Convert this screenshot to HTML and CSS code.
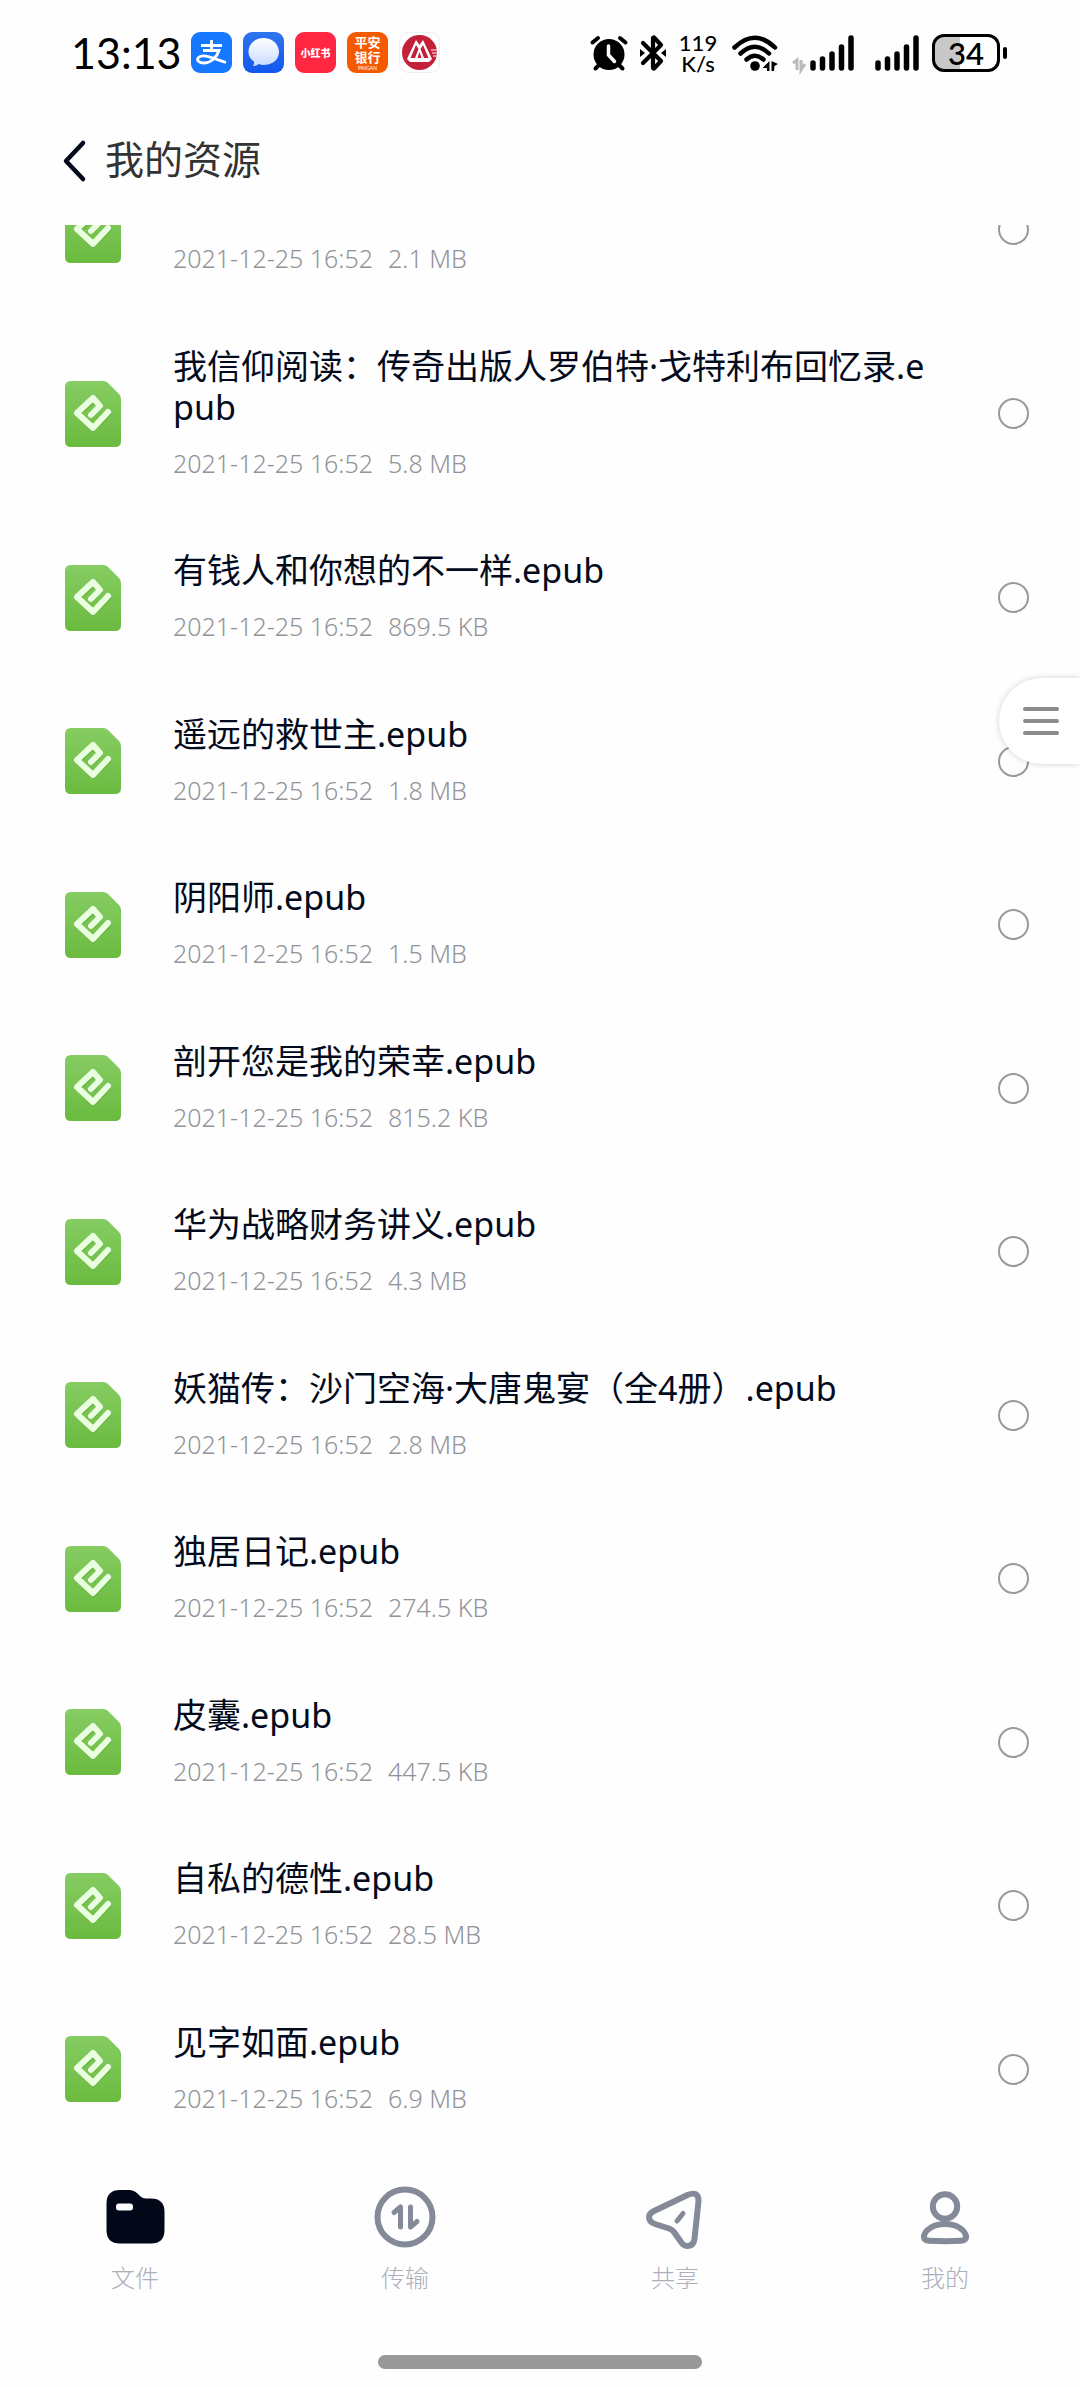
FILE: index.html
```html
<!DOCTYPE html>
<html lang="zh-CN">
<head>
    <meta charset="UTF-8">
    <meta name="viewport" content="width=device-width, initial-scale=1.0">
    <title>我的资源</title>
    <link rel="stylesheet" href="styles.css">
</head>
<body>
    <!-- Shared shapes -->
    <svg class="defs" width="0" height="0" aria-hidden="true">
        <defs>
            <linearGradient id="green" x1="0" y1="0" x2="0" y2="1">
                <stop offset="0" stop-color="#86cc62"/>
                <stop offset="1" stop-color="#6abb40"/>
            </linearGradient>
            <linearGradient id="blue" x1="0" y1="0" x2="0" y2="1">
                <stop offset="0" stop-color="#2f74ee"/>
                <stop offset="1" stop-color="#1257ec"/>
            </linearGradient>
            <linearGradient id="bubble" x1="0" y1="0" x2="0" y2="1">
                <stop offset="0" stop-color="#ffffff"/>
                <stop offset="1" stop-color="#c9daff"/>
            </linearGradient>
            <symbol id="epub" viewBox="0 0 56 66">
                <path d="M6 0H38Q41 0 43 2L54 13Q56 15 56 18V60Q56 66 50 66H6Q0 66 0 60V6Q0 0 6 0Z" fill="url(#green)"/>
                <path d="M43 33L28 48L13 33L28 19L35 26L27 34" fill="none" stroke="#4f9d2b" stroke-opacity=".45" stroke-width="6" stroke-linecap="round" stroke-linejoin="round"/>
                <path d="M43 31L28 47L12 32L28 17L35 25L26 34" fill="none" stroke="#eaffe0" stroke-width="6" stroke-linecap="round" stroke-linejoin="round"/>
            </symbol>
            <symbol id="signal" viewBox="0 0 44 36">
                <path d="M3 28V33M12.500 24V33M22 19V33M31.500 12V33M41 3V33" stroke="#000" stroke-width="5.500" stroke-linecap="round"/>
            </symbol>
        </defs>
    </svg>

    <div class="status-bar">
        <span class="time">13:13</span>
        <div class="apps">
            <svg width="41" height="41" viewBox="0 0 41 41">
                <rect width="41" height="41" rx="9" fill="#1677ff"/>
                <path d="M10 13.500H31M20.500 8V18M12 18.500H28C26 25 20 31 13 31C8 31 5 28 7.500 25.500C12 21.500 21 26 35 30.500" fill="none" stroke="#fff" stroke-width="2.800"/>
            </svg>
            <svg width="41" height="41" viewBox="0 0 41 41">
                <rect width="41" height="41" rx="9" fill="url(#blue)"/>
                <path d="M20.500 6C29 6 36 12 36 20S29 33 20.500 33Q18 33 16 32Q14 34 10 34Q11.500 32 11 29.500C8 27.500 5.500 24 5.500 20C5.500 12 12 6 20.500 6Z" fill="url(#bubble)"/>
            </svg>
            <span class="app app-red">小红书</span>
            <span class="app app-orange"><b>平安</b><b>银行</b><i>PINGAN</i></span>
            <svg width="41" height="41" viewBox="0 0 41 41">
                <rect x=".5" y=".5" width="40" height="40" rx="9" fill="#fff" stroke="#eee"/>
                <circle cx="20.500" cy="20.500" r="17.500" fill="#c4203a"/>
                <path d="M8 27L17 8L20.500 13L24 8L33 27L30 30H11Z" fill="#fff"/>
                <path d="M17 13L19.500 17L16 26H11.500ZM24 13L29.500 26H25L21.500 17ZM20.500 20L22.500 26H18.500Z" fill="#c4203a"/>
                <path d="M32 18H39M33 21H39M34 24H38" stroke="#fff" stroke-width="1"/>
            </svg>
        </div>

        <div class="indicators">
            <svg width="38" height="36" viewBox="0 0 38 36">
                <circle cx="19" cy="19.500" r="15.500"/>
                <path d="M2.500 7.500L8 3M35.500 7.500L30 3M9 30L5.500 33.500M29 30L32.500 33.500" stroke="#000" stroke-width="4" stroke-linecap="round"/>
                <path d="M18.500 11V20L24.500 26.500" fill="none" stroke="#fff" stroke-width="3.500" stroke-linecap="round" stroke-linejoin="round"/>
            </svg>
            <svg class="bluetooth" width="26" height="36" viewBox="0 0 26 36">
                <path d="M3 8L21 26L14 33.500L13 33V3L14 2.500L21 10L3 28" fill="none" stroke="#000" stroke-width="4.200" stroke-linecap="round" stroke-linejoin="round"/>
                <path d="M0 14L5 18L0 22ZM26 14L21 18L26 22Z"/>
            </svg>
            <span class="speed"><span>119</span><span>K/s</span></span>
            <svg class="wifi" width="46" height="36" viewBox="0 0 46 36">
                <path d="M2.500 12.500Q23 -7 43 12.500M8.500 18.500Q23 5 37 18.500M14.500 24.500Q23 17 31.500 24.500" fill="none" stroke="#000" stroke-width="4.500" stroke-linecap="round"/>
                <circle cx="23" cy="31" r="4.800"/>
                <path d="M37.500 26V36H35V33H30.500ZM39.500 36V26L46 29L42.500 31L42 36Z"/>
            </svg>
            <svg class="data" width="14" height="36" viewBox="0 0 14 36">
                <path d="M1 28L5 25V35M9 25V35L13 29" fill="none" stroke="#bbb" stroke-width="3"/>
            </svg>
            <svg class="bars" width="44" height="36"><use href="#signal"/></svg>
            <svg class="bars-second" width="44" height="36"><use href="#signal"/></svg>
            <span class="battery">34</span>
            <span class="battery-tip"></span>
        </div>
    </div>

    <header class="header">
        <button type="button" class="back" aria-label="返回">
            <svg width="24" height="42" viewBox="0 0 24 42">
                <path d="M21 3L4 21L21 39" fill="none" stroke="#03081a" stroke-width="4.500" stroke-linecap="round" stroke-linejoin="round"/>
            </svg>
        </button>
        <h1>我的资源</h1>
    </header>

    <main class="files">
        <ul class="file-list">
            <li class="file">
                <svg class="file-icon"><use href="#epub"/></svg>
                <label class="file-info" for="f0">
                    <span class="name"></span>
                    <span class="meta"><span>2021-12-25 16:52</span><span>2.1 MB</span></span>
                </label>
                <input type="checkbox" id="f0">
            </li>
            <li class="file">
                <svg class="file-icon"><use href="#epub"/></svg>
                <label class="file-info" for="f1">
                    <span class="name">我信仰阅读：传奇出版人罗伯特·戈特利布回忆录.epub</span>
                    <span class="meta"><span>2021-12-25 16:52</span><span>5.8 MB</span></span>
                </label>
                <input type="checkbox" id="f1">
            </li>
            <li class="file">
                <svg class="file-icon"><use href="#epub"/></svg>
                <label class="file-info" for="f2">
                    <span class="name">有钱人和你想的不一样.epub</span>
                    <span class="meta"><span>2021-12-25 16:52</span><span>869.5 KB</span></span>
                </label>
                <input type="checkbox" id="f2">
            </li>
            <li class="file">
                <svg class="file-icon"><use href="#epub"/></svg>
                <label class="file-info" for="f3">
                    <span class="name">遥远的救世主.epub</span>
                    <span class="meta"><span>2021-12-25 16:52</span><span>1.8 MB</span></span>
                </label>
                <input type="checkbox" id="f3">
            </li>
            <li class="file">
                <svg class="file-icon"><use href="#epub"/></svg>
                <label class="file-info" for="f4">
                    <span class="name">阴阳师.epub</span>
                    <span class="meta"><span>2021-12-25 16:52</span><span>1.5 MB</span></span>
                </label>
                <input type="checkbox" id="f4">
            </li>
            <li class="file">
                <svg class="file-icon"><use href="#epub"/></svg>
                <label class="file-info" for="f5">
                    <span class="name">剖开您是我的荣幸.epub</span>
                    <span class="meta"><span>2021-12-25 16:52</span><span>815.2 KB</span></span>
                </label>
                <input type="checkbox" id="f5">
            </li>
            <li class="file">
                <svg class="file-icon"><use href="#epub"/></svg>
                <label class="file-info" for="f6">
                    <span class="name">华为战略财务讲义.epub</span>
                    <span class="meta"><span>2021-12-25 16:52</span><span>4.3 MB</span></span>
                </label>
                <input type="checkbox" id="f6">
            </li>
            <li class="file">
                <svg class="file-icon"><use href="#epub"/></svg>
                <label class="file-info" for="f7">
                    <span class="name">妖猫传：沙门空海·大唐鬼宴（全4册）.epub</span>
                    <span class="meta"><span>2021-12-25 16:52</span><span>2.8 MB</span></span>
                </label>
                <input type="checkbox" id="f7">
            </li>
            <li class="file">
                <svg class="file-icon"><use href="#epub"/></svg>
                <label class="file-info" for="f8">
                    <span class="name">独居日记.epub</span>
                    <span class="meta"><span>2021-12-25 16:52</span><span>274.5 KB</span></span>
                </label>
                <input type="checkbox" id="f8">
            </li>
            <li class="file">
                <svg class="file-icon"><use href="#epub"/></svg>
                <label class="file-info" for="f9">
                    <span class="name">皮囊.epub</span>
                    <span class="meta"><span>2021-12-25 16:52</span><span>447.5 KB</span></span>
                </label>
                <input type="checkbox" id="f9">
            </li>
            <li class="file">
                <svg class="file-icon"><use href="#epub"/></svg>
                <label class="file-info" for="f10">
                    <span class="name">自私的德性.epub</span>
                    <span class="meta"><span>2021-12-25 16:52</span><span>28.5 MB</span></span>
                </label>
                <input type="checkbox" id="f10">
            </li>
            <li class="file">
                <svg class="file-icon"><use href="#epub"/></svg>
                <label class="file-info" for="f11">
                    <span class="name">见字如面.epub</span>
                    <span class="meta"><span>2021-12-25 16:52</span><span>6.9 MB</span></span>
                </label>
                <input type="checkbox" id="f11">
            </li>
        </ul>
        <button type="button" class="side-menu" aria-label="菜单">
            <svg width="38" height="30" viewBox="0 0 38 30">
                <path d="M3 3H35M3 15H35M3 27H35" stroke="#8c8c8c" stroke-width="4" stroke-linecap="round"/>
            </svg>
        </button>
    </main>

    <nav class="tabs">
        <a href="#files">
            <svg width="62" height="62" viewBox="0 0 62 62">
                <path d="M16 4H25Q30 4 34 8Q38 12.500 42 12.500H47Q60.500 12.500 60.500 26V44Q60.500 57.500 47 57.500H16Q2.500 57.500 2.500 44V17.500Q2.500 4 16 4Z" fill="#020818"/>
                <rect x="12" y="17.500" width="17" height="7" rx="3" fill="#fff"/>
            </svg>
            文件
        </a>
        <a href="#transfer">
            <svg width="62" height="62" viewBox="0 0 62 62">
                <circle cx="31" cy="31" r="27.500"/>
                <path stroke-width="5" d="M20 26.500L26.500 21V41M36.500 21V41L43 35.500"/>
            </svg>
            传输
        </a>
        <a href="#share">
            <svg width="62" height="62" viewBox="0 0 62 62">
                <path d="M10 25L43.500 9Q54.500 4.500 54.500 15L50.500 53Q49.500 60 43 60Q39.500 60 37 56L30 46Q28 43.500 25 42.500L11 38Q5 36 5 31Q5 27.500 10 25Z"/>
                <path stroke-width="5" d="M33 35L39 27.500"/>
            </svg>
            共享
        </a>
        <a href="#mine">
            <svg width="62" height="62" viewBox="0 0 62 62">
                <circle cx="31" cy="20.500" r="12.200"/>
                <path d="M31 38C20 38 12.500 43 10.200 49Q8.800 54.500 15 54.800Q31 55.600 47 54.800Q53.200 54.500 51.800 49C49.500 43 42 38 31 38Z"/>
            </svg>
            我的
        </a>
    </nav>
    <div class="home-indicator"></div>
</body>
</html>
```
FILE: styles.css
```css
* {
    box-sizing: border-box;
}

body {
    margin: 0;
    min-height: 100vh;
    display: flex;
    flex-direction: column;
    background: #fefefe;
    color: #030a1c;
    font-family: "Noto Sans", "Noto Sans CJK SC", sans-serif;
}

svg {
    display: block;
    flex: none;
    overflow: visible;
}

button {
    padding: 0;
    border: none;
    background: none;
    cursor: pointer;
}

.defs {
    position: absolute;
}

/* Status bar */
.status-bar {
    display: flex;
    align-items: center;
    justify-content: space-between;
    height: 105px;
    padding: 0 73px 0 71px;
    color: #000;
}

.time {
    width: 108px;
    margin-right: 12px;
    font-family: Lato, sans-serif;
    font-size: 43px;
    line-height: 48px;
    white-space: nowrap;
}

.apps {
    display: flex;
    gap: 11px;
    margin-right: auto;
}

.app {
    display: flex;
    flex-direction: column;
    align-items: center;
    justify-content: center;
    width: 41px;
    height: 41px;
    border-radius: 9px;
    color: #fff;
    font-weight: 900;
    white-space: nowrap;
}

.app-red {
    background: #ff2741;
    font-size: 10px;
}

.app-orange {
    background: #f55a00;
    font-size: 13px;
    line-height: 15px;
}

.app-orange b {
    font-weight: 700;
}

.app-orange i {
    font-family: Lato, sans-serif;
    font-size: 5px;
    line-height: 6px;
    font-style: normal;
    font-weight: 400;
}

.indicators {
    display: flex;
    align-items: center;
}

.bluetooth {
    margin-left: 12px;
}

.speed {
    display: flex;
    flex-direction: column;
    align-items: center;
    width: 38px;
    margin-left: 13px;
    font-family: Lato, sans-serif;
    font-size: 22px;
    line-height: 21px;
    font-weight: 500;
}

.wifi {
    margin-left: 15px;
}

.data {
    margin-left: 14px;
}

.bars {
    margin-left: 4px;
}

.bars-second {
    margin-left: 21px;
}

.battery {
    width: 68px;
    height: 38px;
    margin-left: 13px;
    border: 3px solid #000;
    border-radius: 12px;
    background: linear-gradient(to right, #c8c8c8 40%, #fff 40%);
    font-family: Lato, sans-serif;
    font-size: 31px;
    line-height: 32px;
    font-weight: 600;
    text-align: center;
}

.battery-tip {
    width: 4px;
    height: 12px;
    margin-left: 3px;
    border-radius: 2px;
    background: #000;
}

/* Title */
.header {
    display: flex;
    align-items: center;
    gap: 19px;
    height: 120px;
    padding: 0 62px 8px;
}

.header h1 {
    margin: 0;
    padding-bottom: 4px;
    color: #333;
    font-size: 39px;
    line-height: 56px;
    font-weight: 400;
}

/* File list */
.files {
    position: relative;
    flex: 1 0 auto;
    display: flex;
    flex-direction: column;
    overflow: hidden;
}

.file-list {
    flex: 1 0 auto;
    display: flex;
    flex-direction: column;
    margin: -77px 0 0;
    padding: 0;
    list-style: none;
}

.file {
    flex: 1 0 auto;
    display: flex;
    align-items: center;
    padding: 34px 51px 34px 65px;
}

.file-icon {
    width: 56px;
    height: 66px;
}

.file-info {
    flex: 1;
    display: flex;
    flex-direction: column;
    gap: 20px;
    margin: 0 70px 0 52px;
    padding-bottom: 4px;
}

.name {
    min-height: 41px;
    font-size: 34px;
    line-height: 41px;
    word-break: break-all;
}

.meta {
    display: flex;
    gap: 15px;
    color: #919399;
    font-size: 25px;
    line-height: 30px;
    font-weight: 300;
}

.file input {
    appearance: none;
    width: 31px;
    height: 31px;
    margin: 0;
    border: 2px solid #999;
    border-radius: 50%;
}

.file input:checked {
    background: #999;
}

.side-menu {
    position: absolute;
    top: 453px;
    right: 0;
    display: flex;
    align-items: center;
    width: 81px;
    height: 86px;
    padding-left: 23px;
    border-radius: 43px 0 0 43px;
    background: #fff;
    box-shadow: 0 0 6px rgba(0, 0, 0, 0.18);
}

/* Bottom tabs */
.tabs {
    display: grid;
    grid-template-columns: repeat(4, 1fr);
    padding-top: 35px;
}

.tabs a {
    display: flex;
    flex-direction: column;
    align-items: center;
    gap: 12px;
    color: #abaebb;
    font-size: 24px;
    line-height: 36px;
    font-weight: 300;
    text-decoration: none;
}

.tabs svg {
    fill: none;
    stroke: #858a99;
    stroke-width: 6;
    stroke-linecap: round;
    stroke-linejoin: round;
}

.tabs a:first-child svg {
    stroke: none;
}

.home-indicator {
    width: 30%;
    height: 14px;
    margin: 59px auto 18px;
    border-radius: 7px;
    background: #999;
}
```
